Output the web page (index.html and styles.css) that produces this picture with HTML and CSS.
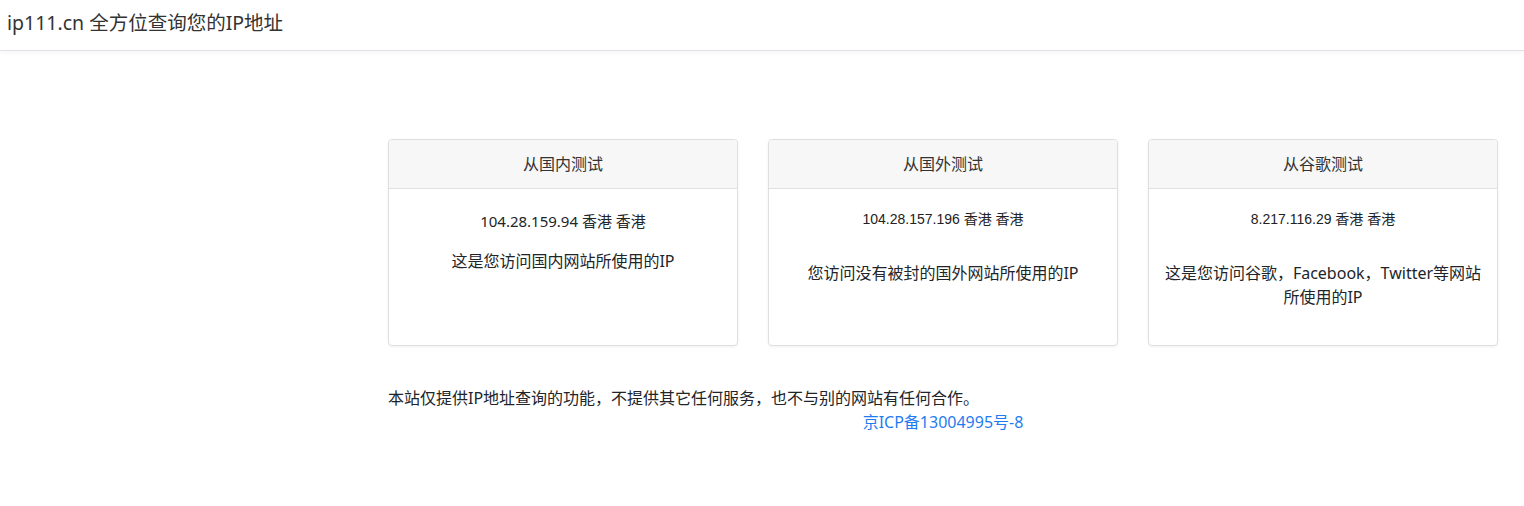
FILE: index.html
```html
<!DOCTYPE html>
<html lang="zh-CN">
<head>
<meta charset="utf-8">
<title>ip111.cn 全方位查询您的IP地址</title>
<link rel="stylesheet" href="styles.css">
</head>
<body>
<header class="navbar">
  <span class="brand">ip111.cn 全方位查询您的IP地址</span>
</header>
<main class="page">
  <div class="sidebar"></div>
  <div class="content">
    <div class="cards">
      <section class="card">
        <div class="card-header">从国内测试</div>
        <div class="card-body">
          <p class="ip ip-main">104.28.159.94 香港 香港</p>
          <p class="desc desc-near">这是您访问国内网站所使用的IP</p>
        </div>
      </section>
      <section class="card">
        <div class="card-header">从国外测试</div>
        <div class="card-body">
          <p class="ip ip-small">104.28.157.196 香港 香港</p>
          <p class="desc desc-far">您访问没有被封的国外网站所使用的IP</p>
        </div>
      </section>
      <section class="card">
        <div class="card-header">从谷歌测试</div>
        <div class="card-body">
          <p class="ip ip-small">8.217.116.29 香港 香港</p>
          <p class="desc desc-far">这是您访问谷歌，Facebook，Twitter等网站所使用的IP</p>
        </div>
      </section>
    </div>
    <footer class="footer">
      <p class="notice">本站仅提供IP地址查询的功能，不提供其它任何服务，也不与别的网站有任何合作。</p>
      <p class="icp"><a href="#">京ICP备13004995号-8</a></p>
    </footer>
  </div>
</main>
</body>
</html>
```
FILE: styles.css
```css
* { box-sizing: border-box; }

html, body {
  margin: 0;
  padding: 0;
  background: #fff;
}

body {
  font-family: "Noto Sans", "Noto Sans CJK SC", sans-serif;
  font-size: 16px;
  line-height: 24px;
  color: #212529;
}

p { margin: 0; }

.navbar {
  height: 51px;
  padding: 8px 7px 0;
  border-bottom: 1px solid #e0e2ea;
  box-shadow: 0 2px 5px rgba(0, 0, 0, 0.04);
  background: #fff;
}

.brand {
  font-size: 19.5px;
  line-height: 30px;
  color: #333;
}

.page {
  display: flex;
  padding-top: 88px;
}

.sidebar {
  width: 388px;
  flex: none;
}

.content {
  width: 1110px;
  flex: none;
}

.cards {
  display: flex;
  gap: 30px;
}

.card {
  width: 350px;
  flex: none;
  border: 1px solid #dfdfdf;
  border-radius: 4px;
  background: #fff;
  box-shadow: 0 1px 3px rgba(0, 0, 0, 0.06);
  overflow: hidden;
}

.card-header {
  height: 49px;
  padding: 12px 20px;
  background: #f7f7f7;
  border-bottom: 1px solid #dfdfdf;
  text-align: center;
  font-size: 16px;
  line-height: 24px;
  color: #333;
}

.card-body {
  height: 156px;
  padding: 20px 12px 0;
  text-align: center;
}

.ip-main {
  font-size: 15px;
  line-height: 24px;
}

.ip-small {
  font-family: "Liberation Sans", "Noto Sans CJK SC", sans-serif;
  font-size: 14px;
  line-height: 20px;
  color: #222;
}

.desc {
  font-size: 16px;
  line-height: 24px;
}

.desc-near { margin-top: 16px; }
.desc-far { margin-top: 32px; }

.footer {
  margin-top: 40px;
}

.notice {
  font-size: 16px;
  line-height: 24px;
}

.icp {
  text-align: center;
  font-size: 16px;
  line-height: 24px;
}

.icp a {
  color: #1f7cf0;
  text-decoration: none;
}
```
